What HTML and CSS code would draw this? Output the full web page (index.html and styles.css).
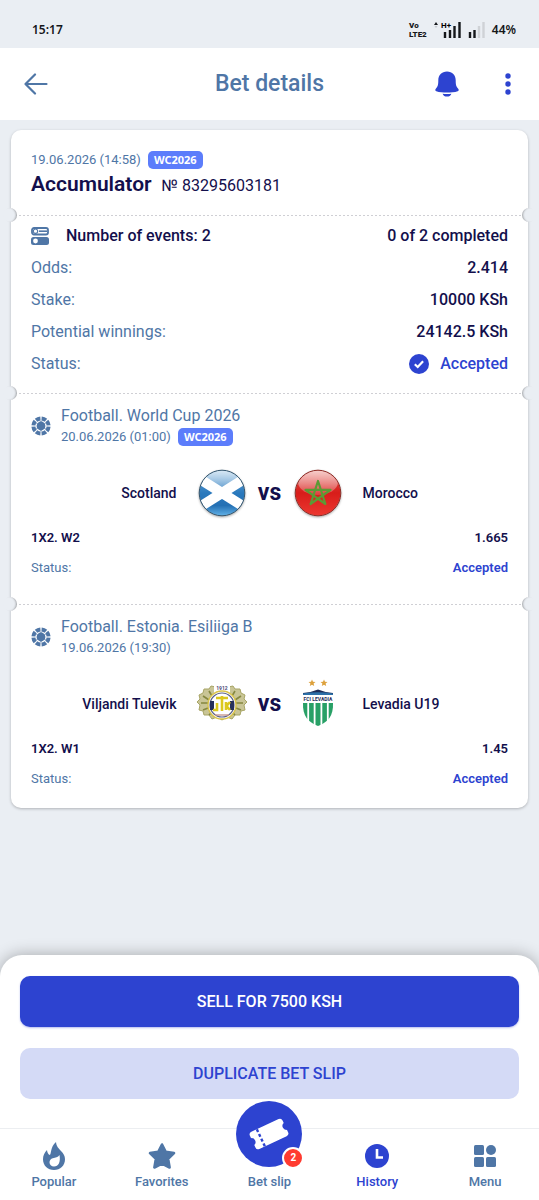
FILE: index.html
```
<!DOCTYPE html>
<html lang="en">
<head>
  <meta charset="UTF-8">
  <meta name="viewport" content="width=device-width, initial-scale=1.0">
  <title>Bet details</title>
  <link rel="stylesheet" href="styles.css">
</head>
<body>
  <!-- Shared icons -->
  <svg width="0" height="0" class="sprite" aria-hidden="true">
    <symbol id="ball" viewBox="0 0 20 20">
      <circle cx="10" cy="10" r="7.6" fill="none" stroke="currentColor" stroke-width="4" pathLength="80" stroke-dasharray="8 2" stroke-dashoffset="-1"/>
      <circle cx="10" cy="10" r="4.400" fill="currentColor"/>
      <path d="M10 4.800v10.400M5.500 7.400l9 5.200M14.500 7.400l-9 5.200" stroke="currentColor" stroke-width="1"/>
    </symbol>
  </svg>

  <div class="statusbar">
    <span>15:17</span>
    <div class="status-icons">
      <div class="volte"><div>Vo</div><div>LTE2</div></div>
      <svg width="27" height="18" viewBox="0 0 27 18" aria-hidden="true">
        <path d="M0 4l2-3 2 3z" fill="#15171a"/>
        <path d="M.5 5h3L2 7z" fill="#c3c7cc"/>
        <text x="7" y="7" class="signal-type">H+</text>
        <path d="M11 11v6M16 9v8M20.500 5v12M25.500 1v16" stroke="#15171a" stroke-width="2.400"/>
      </svg>
      <svg width="17" height="18" viewBox="0 0 17 18" aria-hidden="true">
        <path d="M2 11v6M6.500 9v8" stroke="#15171a" stroke-width="2.400"/>
        <path d="M11 5v12M15.500 1v16" stroke="#cfd2d6" stroke-width="2.400"/>
      </svg>
      <span>44%</span>
    </div>
  </div>

  <header class="header">
    <button class="icon-btn back" aria-label="Back">
      <svg width="24" height="22" viewBox="0 0 24 22" fill="none" stroke="currentColor" stroke-width="2.200" stroke-linecap="round" stroke-linejoin="round">
        <path d="M22.500 11H1.500M11 1.500L1.500 11l9.500 9.500"/>
      </svg>
    </button>
    <h1>Bet details</h1>
    <div class="header-actions">
      <button class="icon-btn" aria-label="Notifications">
        <svg width="24" height="26" viewBox="0 0 24 26" fill="currentColor">
          <path d="M12 .5c5.300 0 8.700 3.700 8.700 8.700 0 5 .6 6.300 2.300 8.200.9 1 1.100 2.300-.3 2.800-3 1-6.800 1.400-10.700 1.400S4.300 21.200 1.300 20.200c-1.400-.5-1.200-1.800-.3-2.800 1.700-1.900 2.300-3.200 2.300-8.200C3.300 4.200 6.700.5 12 .5z"/>
          <path d="M7.600 22.700c2.900.3 5.900.3 8.800 0-.6 1.900-2.300 2.900-4.400 2.900s-3.800-1-4.400-2.900z"/>
        </svg>
      </button>
      <button class="icon-btn" aria-label="More">
        <svg width="6" height="22" viewBox="0 0 6 22" fill="currentColor">
          <circle cx="3" cy="3" r="2.700"/><circle cx="3" cy="11" r="2.700"/><circle cx="3" cy="19" r="2.700"/>
        </svg>
      </button>
    </div>
  </header>

  <main class="content">
    <article class="card">
      <section class="slip-head">
        <div class="meta"><time>19.06.2026 (14:58)</time><span class="tag">WC2026</span></div>
        <div class="slip-title"><h2>Accumulator</h2><span>№ 83295603181</span></div>
      </section>

      <div class="tear"></div>

      <section class="summary">
        <div class="row strong">
          <div class="row-label">
            <svg width="18" height="18" viewBox="0 0 18 18" class="slate" aria-hidden="true">
              <rect x="1" y="1" width="16" height="6.500" rx="2" fill="none" stroke="currentColor" stroke-width="1.800"/>
              <circle cx="4.500" cy="4.200" r="2.200" fill="#fff" stroke="currentColor" stroke-width="1.200"/>
              <path d="M8 4.200h8" stroke="currentColor" stroke-width="1.600"/>
              <rect x="0" y="10" width="18" height="8" rx="2.500" fill="currentColor"/>
              <circle cx="4.500" cy="14" r="2.400" fill="#fff"/>
            </svg>
            <span>Number of events: 2</span>
          </div>
          <span>0 of 2 completed</span>
        </div>
        <div class="row"><span>Odds:</span><b>2.414</b></div>
        <div class="row"><span>Stake:</span><b>10000 KSh</b></div>
        <div class="row"><span>Potential winnings:</span><b>24142.5 KSh</b></div>
        <div class="row">
          <span>Status:</span>
          <b class="accepted">
            <svg width="20" height="20" viewBox="0 0 20 20" aria-hidden="true">
              <circle cx="10" cy="10" r="10" fill="currentColor"/>
              <path d="M5.800 10.300l2.900 2.700 5.400-5.800" fill="none" stroke="#fff" stroke-width="2.200"/>
            </svg>
            Accepted
          </b>
        </div>
      </section>

      <div class="tear"></div>

      <section class="event">
        <div class="event-head">
          <svg width="20" height="20" aria-hidden="true"><use href="#ball"/></svg>
          <div>
            <h3>Football. World Cup 2026</h3>
            <div class="meta"><time>20.06.2026 (01:00)</time><span class="tag">WC2026</span></div>
          </div>
        </div>
        <div class="teams">
          <span class="home">Scotland</span>
          <svg width="50" height="50" viewBox="0 0 50 50" class="flag" role="img" aria-label="Scotland flag">
            <defs>
              <clipPath id="round"><circle cx="25" cy="25" r="22.500"/></clipPath>
              <linearGradient id="sky" x1="0" y1="0" x2="0" y2="1">
                <stop offset="0" stop-color="#7db3dc"/><stop offset=".5" stop-color="#2a79bd"/><stop offset=".75" stop-color="#2470b4"/><stop offset="1" stop-color="#6fc0f2"/>
              </linearGradient>
              <linearGradient id="gloss" x1="0" y1="0" x2="0" y2="1">
                <stop offset="0" stop-color="#fff" stop-opacity=".75"/><stop offset="1" stop-color="#fff" stop-opacity=".15"/>
              </linearGradient>
            </defs>
            <g clip-path="url(#round)">
              <rect width="50" height="50" fill="url(#sky)"/>
              <path d="M-2 8l54 34M52 8L-2 42" stroke="#fff" stroke-width="10"/>
              <ellipse cx="25" cy="12" rx="20" ry="11" fill="url(#gloss)"/>
            </g>
            <circle cx="25" cy="25" r="22.800" fill="none" stroke="#33566f" stroke-width="1"/>
          </svg>
          <span class="vs">vs</span>
          <svg width="50" height="50" viewBox="0 0 50 50" class="flag" role="img" aria-label="Morocco flag">
            <defs>
              <linearGradient id="red" x1="0" y1="0" x2="0" y2="1">
                <stop offset="0" stop-color="#e2554d"/><stop offset=".5" stop-color="#d81d1a"/><stop offset="1" stop-color="#ee3a32"/>
              </linearGradient>
            </defs>
            <g clip-path="url(#round)">
              <rect width="50" height="50" fill="url(#red)"/>
              <ellipse cx="25" cy="14" rx="20" ry="13" fill="url(#gloss)"/>
              <path d="M25 13l7.400 23L12.500 21.800h25L17.600 36z" fill="none" stroke="#5c9a35" stroke-width="2.200" stroke-linejoin="round"/>
            </g>
            <circle cx="25" cy="25" r="22.800" fill="none" stroke="#8f2a24" stroke-width="1"/>
          </svg>
          <span>Morocco</span>
        </div>
        <div class="market"><span>1X2. W2</span><span>1.665</span></div>
        <div class="market"><span class="muted">Status:</span><span class="accepted">Accepted</span></div>
      </section>

      <div class="tear"></div>

      <section class="event">
        <div class="event-head">
          <svg width="20" height="20" aria-hidden="true"><use href="#ball"/></svg>
          <div>
            <h3>Football. Estonia. Esiliiga B</h3>
            <div class="meta"><time>19.06.2026 (19:30)</time></div>
          </div>
        </div>
        <div class="teams">
          <span class="home">Viljandi Tulevik</span>
          <svg width="50" height="50" viewBox="0 0 50 50" role="img" aria-label="Viljandi Tulevik crest">
            <!-- oak wreath -->
            <g fill="#c9c596" stroke="#a8a566" stroke-width="1" stroke-linejoin="round">
              <path d="M19 8l-5-1-2 3-5 0-1 4-4 2 1 4-3 3 3 3-1 5 4 1 1 4 5 0 3 4 5-2 5 3V8z"/>
              <path d="M31 8l5-1 2 3 5 0 1 4 4 2-1 4 3 3-3 3 1 5-4 1-1 4-5 0-3 4-5-2-5 3V8z"/>
            </g>
            <path d="M12 12l3 5M6 17l6 4M4 24h7M6 31l5-2M12 36l4-4M38 12l-3 5M44 17l-6 4M46 24h-7M44 31l-5-2M38 36l-4-4" stroke="#85873f" stroke-width="1.600"/>
            <path d="M17 7h16v9H17z" fill="#fff"/>
            <circle cx="25" cy="26" r="14" fill="#fff" stroke="#d9c34a" stroke-width="1.400"/>
            <circle cx="25" cy="26" r="12" fill="#fff" stroke="#5a6087" stroke-width="1.200"/>
            <path d="M13 22h4v9h-4zM33 22h4v9h-4z" fill="#27305c"/>
            <path d="M19 19h12M25 17v15M20 24v7h-4M29 23v8M33 23l-3.500 4 3.500 4" fill="none" stroke="#dcc81e" stroke-width="2.600"/>
            <path d="M18 36h14" stroke="#c79b91" stroke-width="1.400"/>
            <text x="25" y="11" class="crest-year">1912</text>
          </svg>
          <span class="vs">vs</span>
          <svg width="50" height="50" viewBox="0 0 50 50" role="img" aria-label="FCI Levadia crest">
            <path d="M19 .5l1 2.300 2.500.2-1.900 1.600.6 2.400-2.200-1.300L16.800 7l.6-2.400L15.500 3l2.500-.2zM31 .5l1 2.300 2.500.2-1.900 1.600.6 2.400-2.200-1.300L28.800 7l.6-2.400L27.500 3l2.500-.2z" fill="#dda13c"/>
            <path d="M10 14q8-.5 15-3.500 7 3 15 3.500v2H10z" fill="#1d2b55"/>
            <path d="M10 14.500q15-2.500 30 0V16H10z" fill="#2c70a8"/>
            <path d="M10 24h30c.5 13-5 19-15 23-10-4-15.500-10-15-23z" fill="#28a066"/>
            <path d="M15.200 24v19M21.600 24v23M28.400 24v23M34.800 24v19" stroke="#fff" stroke-width="1.800"/>
            <text x="25" y="22" class="crest-name">FCI LEVADIA</text>
          </svg>
          <span>Levadia U19</span>
        </div>
        <div class="market"><span>1X2. W1</span><span>1.45</span></div>
        <div class="market"><span class="muted">Status:</span><span class="accepted">Accepted</span></div>
      </section>
    </article>
  </main>

  <div class="bottom">
    <div class="actions">
      <button class="btn btn-primary">SELL FOR 7500 KSH</button>
      <button class="btn btn-light">DUPLICATE BET SLIP</button>
    </div>
    <nav class="tabs">
      <a href="#popular">
        <svg width="24" height="28" viewBox="0 0 24 28" fill="currentColor" aria-hidden="true">
          <path d="M14 0c.4 4.500 2.500 6.200 5 9 2.300 2.500 4 4.800 4 8.200C23 23.500 18.300 28 12 28S1 23.500 1 17.200c0-3.700 1.500-6.500 4-9.200.3 2.500 1 4 2.700 5C9.500 12.500 8 5 14 0z"/>
          <path d="M17.500 13c1.300 7-1 11.500-5.500 11.500-2.600 0-4.500-1.700-4.500-4.200 0-2 1.300-3.600 3.300-4.100 2.800-.8 5-.8 6.700-3.200z" fill="#fff"/>
        </svg>
        Popular
      </a>
      <a href="#favorites">
        <svg width="28" height="28" viewBox="0 0 28 28" fill="currentColor" stroke="currentColor" stroke-width="2.600" stroke-linejoin="round" aria-hidden="true">
          <path d="M14 2.500l3.700 7.300 8.300 1.300-5.900 5.700 1.500 8.700L14 21.600l-7.600 3.900 1.500-8.700L2 11.100l8.300-1.300z"/>
        </svg>
        Favorites
      </a>
      <a href="#betslip" class="betslip">
        <span class="bubble">
          <svg width="42" height="36" viewBox="-21 -18 42 36" aria-hidden="true">
            <g transform="rotate(-25)">
              <path d="M-15-9.500h30a3 3 0 0 1 3 3v2.700a4 4 0 0 0 0 7.600v2.700a3 3 0 0 1-3 3h-30a3 3 0 0 1-3-3V3.800a4 4 0 0 0 0-7.600v-2.700a3 3 0 0 1 3-3z" fill="#fff"/>
              <path d="M-9-9.500v19" stroke="#2d43d0" stroke-width="2.400" stroke-dasharray="3 2.300"/>
            </g>
          </svg>
          <span class="count">2</span>
        </span>
        Bet slip
      </a>
      <a href="#history" class="active">
        <svg width="24" height="28" viewBox="0 0 24 28" aria-hidden="true">
          <circle cx="12" cy="14" r="12" fill="currentColor"/>
          <path d="M12 7v8.500h6" fill="none" stroke="#fff" stroke-width="2.600"/>
        </svg>
        History
      </a>
      <a href="#menu">
        <svg width="22" height="28" viewBox="0 0 22 28" fill="currentColor" aria-hidden="true">
          <rect x="0" y="3" width="10" height="10" rx="1.500"/><circle cx="17" cy="8" r="5"/>
          <rect x="0" y="15" width="10" height="10" rx="1.500"/><rect x="12" y="15" width="10" height="10" rx="1.500"/>
        </svg>
        Menu
      </a>
    </nav>
  </div>
</body>
</html>
```
FILE: styles.css
```
* {
  box-sizing: border-box;
  margin: 0;
  padding: 0;
}
body {
  font-family: Roboto, sans-serif;
  font-size: 16px;
  line-height: 20px;
  background-color: #eaeef3;
  color: #130f4c;
  min-height: 100vh;
  display: flex;
  flex-direction: column;
}
svg {
  display: block;
  flex-shrink: 0;
}
.sprite {
  position: absolute;
}

/* status bar */
.statusbar {
  height: 48px;
  padding: 12px 23px 0 32px;
  display: flex;
  justify-content: space-between;
  align-items: center;
  font-family: "Noto Sans", sans-serif;
  font-size: 12px;
  font-weight: 600;
  color: #15171a;
}
.status-icons {
  display: flex;
  align-items: center;
  gap: 7px;
}
.volte {
  font-family: Roboto, sans-serif;
  font-size: 8px;
  line-height: 9px;
  font-weight: 900;
}
.signal-type {
  font-family: Roboto, sans-serif;
  font-size: 8px;
  font-weight: 700;
}

/* header */
.header {
  background: white;
  height: 72px;
  padding: 0 24px;
  display: grid;
  grid-template-columns: 1fr auto 1fr;
  align-items: center;
}
.header h1 {
  font-size: 23px;
  line-height: 32px;
  font-weight: 500;
  color: #4f76a6;
}
.icon-btn {
  border: none;
  background: none;
  color: #2d43d0;
  cursor: pointer;
}
.back {
  color: #4f76a6;
  justify-self: start;
}
.header-actions {
  display: flex;
  justify-content: flex-end;
  align-items: center;
  gap: 46px;
  padding-right: 4px;
}

/* card */
.content {
  flex: 1;
  padding: 10px 11px 40px;
}
.card {
  background: white;
  border-radius: 10px;
  box-shadow: 0 1px 3px rgba(0, 0, 0, 0.25);
}
.tear {
  position: relative;
  height: 1px;
  background: repeating-linear-gradient(90deg, #cfcfd4 0 2px, transparent 2px 4px);
}
.tear::before,
.tear::after {
  content: "";
  position: absolute;
  top: -7px;
  width: 14px;
  height: 14px;
  border-radius: 50%;
  background: #eaeef3;
}
.tear::before {
  left: -8px;
  box-shadow: inset -2px 0 2px -1px rgba(0, 0, 0, 0.3);
}
.tear::after {
  right: -8px;
  box-shadow: inset 2px 0 2px -1px rgba(0, 0, 0, 0.3);
}
.meta {
  display: flex;
  align-items: center;
  gap: 7px;
  height: 20px;
  font-size: 13px;
  color: #4f76a6;
}
.tag {
  background: #5c7dfb;
  color: white;
  font-family: "Noto Sans", sans-serif;
  font-size: 11px;
  line-height: 18px;
  font-weight: 700;
  padding: 0 6px;
  border-radius: 5px;
}
.slip-head {
  padding: 20px 20px 17px;
}
.slip-title {
  display: flex;
  align-items: baseline;
  gap: 10px;
}
.slip-title h2 {
  font-size: 21px;
  line-height: 28px;
  font-weight: 600;
}
.summary {
  padding: 4px 20px 13px;
}
.row {
  display: flex;
  justify-content: space-between;
  align-items: center;
  height: 32px;
  color: #4f76a6;
}
.row b,
.strong {
  font-weight: 500;
  color: #130f4c;
}
.row-label {
  display: flex;
  align-items: center;
  gap: 17px;
}
.slate {
  color: #4f76a6;
}
.row .accepted {
  display: flex;
  align-items: center;
  gap: 11px;
}
.accepted,
.row .accepted {
  color: #2d43d0;
}

/* events */
.event {
  padding: 11px 20px 25px;
}
.event:last-child {
  padding-bottom: 18px;
}
.event-head {
  display: flex;
  align-items: center;
  gap: 10px;
  color: #4f76a6;
}
.event-head h3 {
  font-size: 16px;
  line-height: 22px;
  font-weight: 400;
}
.teams {
  display: grid;
  grid-template-columns: 1fr 50px 46px 50px 1fr;
  align-items: center;
  padding: 21px 0 9px;
  font-size: 14px;
  font-weight: 500;
}
.teams > span:last-child {
  padding-left: 20px;
}
.home {
  text-align: right;
  padding-right: 20px;
}
.vs {
  text-align: center;
  font-size: 23px;
  font-weight: 700;
}
.flag {
  filter: drop-shadow(0 1px 1px rgba(0, 0, 0, 0.35));
}
.crest-year {
  font-size: 5px;
  font-weight: 700;
  text-anchor: middle;
  fill: #4d4a78;
}
.crest-name {
  font-size: 5px;
  font-weight: 700;
  text-anchor: middle;
  fill: #1d2b55;
}
.market {
  display: flex;
  justify-content: space-between;
  font-size: 13px;
  font-weight: 600;
  line-height: 22px;
}
.market + .market {
  padding-top: 8px;
}
.muted {
  font-weight: 400;
  color: #4f76a6;
}

/* bottom sheet */
.bottom {
  position: sticky;
  bottom: 0;
  background: white;
  border-radius: 22px 22px 0 0;
  box-shadow: 0 0 16px rgba(0, 0, 0, 0.3);
}
.actions {
  display: flex;
  flex-direction: column;
  gap: 21px;
  padding: 21px 20px 29px;
}
.btn {
  width: 100%;
  height: 51px;
  border: none;
  border-radius: 10px;
  font-family: inherit;
  font-size: 16px;
  font-weight: 500;
  cursor: pointer;
}
.btn-primary {
  background: #2d43d0;
  color: white;
  box-shadow: 0 1px 2px rgba(45, 67, 208, 0.35);
}
.btn-light {
  background: #d4daf6;
  color: #2d43d0;
}
.tabs {
  display: grid;
  grid-template-columns: repeat(5, 1fr);
  grid-template-rows: 100%;
  height: 72px;
  border-top: 1px solid #eceef1;
}
.tabs a {
  display: flex;
  flex-direction: column;
  align-items: center;
  justify-content: flex-end;
  gap: 3px;
  padding-bottom: 9px;
  font-size: 13px;
  font-weight: 500;
  line-height: 18px;
  text-decoration: none;
  color: #4f76a6;
}
.tabs .active {
  color: #2d43d0;
}
.tabs .betslip {
  gap: 6px;
}
/* sticks out above the tab row */
.bubble {
  position: relative;
  width: 66px;
  height: 66px;
  flex-shrink: 0;
  border-radius: 50%;
  background: #2d43d0;
  display: flex;
  align-items: center;
  justify-content: center;
}
.count {
  position: absolute;
  right: -2px;
  bottom: -2px;
  width: 22px;
  height: 22px;
  border: 2px solid white;
  border-radius: 50%;
  background: #ff3b30;
  color: white;
  font-size: 10px;
  font-weight: 700;
  line-height: 18px;
  text-align: center;
}
```
